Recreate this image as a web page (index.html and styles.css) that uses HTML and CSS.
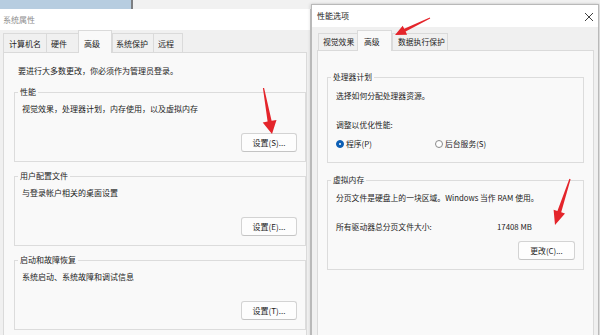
FILE: index.html
```html
<!DOCTYPE html>
<html lang="zh-CN">
<head>
<meta charset="utf-8">
<title>系统属性 / 性能选项</title>
<link rel="stylesheet" href="styles.css">
</head>
<body>
<div class="desk">
  <div class="strip-blue"></div>
  <div class="strip-line"></div>

  <section class="win win-left">
    <header class="titlebar"><span class="title title-inactive">系统属性</span></header>
    <div class="winbody">
      <div class="tabs tabs-left">
        <div class="tab tab-a">计算机名</div>
        <div class="tab tab-b">硬件</div>
        <div class="tab tab-c active">高级</div>
        <div class="tab tab-d">系统保护</div>
        <div class="tab tab-e">远程</div>
      </div>
      <div class="pane pane-left">
        <p class="note">要进行大多数更改，你必须作为管理员登录。</p>
        <fieldset class="group">
          <legend>性能</legend>
          <p class="gtext">视觉效果，处理器计划，内存使用，以及虚拟内存</p>
          <div class="btnrow"><button class="btn">设置(S)...</button></div>
        </fieldset>
        <fieldset class="group">
          <legend>用户配置文件</legend>
          <p class="gtext">与登录帐户相关的桌面设置</p>
          <div class="btnrow"><button class="btn">设置(E)...</button></div>
        </fieldset>
        <fieldset class="group">
          <legend>启动和故障恢复</legend>
          <p class="gtext">系统启动、系统故障和调试信息</p>
          <div class="btnrow"><button class="btn">设置(T)...</button></div>
        </fieldset>
      </div>
    </div>
  </section>

  <section class="win win-right">
    <header class="titlebar titlebar-right">
      <span class="title">性能选项</span>
      <svg class="close" viewBox="0 0 10 10" width="10" height="10"><path d="M1 1L9 9M9 1L1 9" stroke="#2b2b2b" stroke-width="0.9" fill="none"/></svg>
    </header>
    <div class="winbody">
      <div class="tabs tabs-right">
        <div class="tab rtab-a">视觉效果</div>
        <div class="tab rtab-b active">高级</div>
        <div class="tab rtab-c">数据执行保护</div>
      </div>
      <div class="pane pane-right">
        <fieldset class="group group-cpu">
          <legend>处理器计划</legend>
          <p class="gtext">选择如何分配处理器资源。</p>
          <p class="gtext gap17">调整以优化性能:</p>
          <div class="radios">
            <label class="radio"><span class="dot on"></span>程序(P)</label>
            <label class="radio"><span class="dot"></span>后台服务(S)</label>
          </div>
        </fieldset>
        <fieldset class="group group-vm">
          <legend>虚拟内存</legend>
          <p class="gtext">分页文件是硬盘上的一块区域。Windows 当作 RAM 使用。</p>
          <div class="sizerow gap17"><span>所有驱动器总分页文件大小:</span><span>17408 MB</span></div>
          <div class="btnrow btnrow-vm"><button class="btn btn-wide">更改(C)...</button></div>
        </fieldset>
      </div>
    </div>
  </section>

  <svg class="arrows" width="600" height="335" viewBox="0 0 600 335">
    <polygon fill="#e4252b" points="262.9,88.1 264.1,87.9 271.6,120.8 276.5,119.9 272,134 262.7,122.5 267.6,121.6"/>
    <polygon fill="#e4252b" points="429.8,17.55 430.2,18.45 405.6,31.6 407.1,34.7 395,35 402.7,25.7 404.2,28.8"/>
    <polygon fill="#e4252b" points="569.4,178.8 570.6,179.2 561.2,212.3 565,213.6 555,225 553.6,209.8 557.4,211.1"/>
  </svg>
</div>
</body>
</html>
```

FILE: styles.css
```css
* { box-sizing: border-box; }
html, body { margin: 0; padding: 0; }
body {
  width: 600px;
  height: 335px;
  overflow: hidden;
  background: #e6e6e6;
  font-family: "Noto Sans CJK SC", "Noto Sans", sans-serif;
  color: #1c1c1c;
}
p { margin: 0; }

.desk {
  position: relative;
  width: 600px;
  height: 335px;
  overflow: hidden;
  background: #f1f1f1;
}
.strip-blue {
  position: absolute;
  left: 0; top: 0;
  width: 131px; height: 9px;
  background: #b7cde0;
}
.strip-line {
  position: absolute;
  left: 131px; top: 0;
  width: 2px; height: 9px;
  background: #7d7f82;
}

.win {
  position: absolute;
  background: #f0f0f0;
}
.win-left {
  left: 0; top: 9px;
  width: 311px; height: 340px;
  border-right: 1px solid #c9c9c9;
}
.win-right {
  left: 311px; top: 4px;
  width: 288px; height: 340px;
  border: 1px solid #b9b9b9;
  border-bottom: none;
  box-shadow: -1px 0 3px rgba(0,0,0,0.12), 1px 0 2px rgba(0,0,0,0.1);
  z-index: 2;
}

.titlebar {
  height: 21px;
  background: #ffffff;
  display: flex;
  align-items: center;
  padding-left: 3px;
}
.titlebar-right {
  height: 22px;
  padding-left: 5px;
  padding-right: 4px;
  justify-content: space-between;
}
.title {
  font-size: 8px;
  line-height: 12px;
  color: #1a1a1a;
}
.title-inactive { color: #8d8d8d; }
.close { display: block; margin-top: 2px; }

.winbody { padding: 0; }

.tabs {
  display: flex;
  align-items: flex-end;
  position: relative;
  z-index: 1;
}
.tabs-left { height: 19px; margin-top: 3px; padding-left: 3px; }
.tabs-right { height: 17px; margin-top: 6px; padding-left: 6px; }

.tab {
  height: 19px;
  border: 1px solid #dadada;
  border-bottom: none;
  border-right: none;
  background: #f0f0f0;
  font-size: 8px;
  line-height: 16px;
  padding-top: 2px;
  padding-left: 5px;
  white-space: nowrap;
}
.tab.active {
  height: 23px;
  padding-top: 5px;
  margin-bottom: -1px;
  background: #f9f9f9;
  border-right: 1px solid #dadada;
}
.tab-a { width: 43px; }
.tab-b { width: 32px; padding-left: 4px; }
.tab-c { width: 34px; }
.tab-d { width: 41px; padding-left: 3px; }
.tab-e { width: 30px; padding-left: 4px; border-right: 1px solid #dadada; }

.tabs-right .tab {
  height: 17px;
  font-size: 7.8px;
  line-height: 14px;
  padding-top: 1px;
}
.tabs-right .tab.active {
  height: 21px;
  padding-top: 4px;
}
.rtab-a { width: 39px; padding-left: 4px; }
.rtab-b { width: 35px; padding-left: 6px !important; }
.rtab-c { width: 56px; padding-left: 5px; border-right: 1px solid #dadada; }

.pane {
  background: #f9f9f9;
  border: 1px solid #dadada;
  height: 320px;
}
.pane-left {
  margin-left: 3px;
  width: 304px;
  padding: 12px 0 0 10px;
  font-size: 8px;
}
.pane-right {
  margin-left: 5px;
  width: 277px;
  padding: 12px 9px 0 9px;
  font-size: 7.8px;
}

.note {
  line-height: 12px;
  padding-left: 4px;
  white-space: nowrap;
}

.group {
  margin: 8px 0 0 0;
  padding: 5px 8px 9px 5px;
  border: 1px solid #dcdcdc;
  min-width: 0;
}
.pane-left .group:first-of-type { margin-top: 9px; }
.group legend {
  padding: 0 2px;
  margin-left: -2px;
  line-height: 12px;
  white-space: nowrap;
}
.gtext {
  line-height: 12px;
  padding-left: 2px;
  white-space: nowrap;
}
.pane-right .gtext { padding-left: 3px; }
.gap17 { margin-top: 17px; }

.btnrow {
  display: flex;
  justify-content: flex-end;
  margin-top: 18px;
}
.btnrow-vm { margin-top: 8px; }
.btn {
  width: 56px;
  height: 19px;
  padding: 0;
  background: #fdfdfd;
  border: 1px solid #d3d3d3;
  border-bottom-color: #c4c4c4;
  border-radius: 3px;
  font-family: inherit;
  font-size: 8px;
  line-height: 16px;
  color: #1c1c1c;
}
.btn-wide { width: 57px; font-size: 7.8px; }

.group-cpu { padding: 7px 8px 12px 5px; }
.group-vm { margin-top: 11px; padding: 6px 8px 9px 5px; }

.radios {
  display: grid;
  grid-template-columns: 99px auto;
  margin-top: 7px;
  padding-left: 3px;
  line-height: 12px;
}
.radio {
  display: flex;
  align-items: center;
  gap: 2px;
  white-space: nowrap;
}
.dot {
  width: 8px;
  height: 8px;
  border-radius: 50%;
  border: 1px solid #8a8a8a;
  background: #ffffff;
  position: relative;
  flex: none;
}
.dot.on {
  background: #0d5fb5;
  border-color: #0d5fb5;
}
.dot.on::after {
  content: "";
  position: absolute;
  left: 1.75px; top: 1.75px;
  width: 2.5px; height: 2.5px;
  border-radius: 50%;
  background: #ffffff;
}

.sizerow {
  display: grid;
  grid-template-columns: 161px auto;
  padding-left: 3px;
  line-height: 12px;
  white-space: nowrap;
}

.arrows {
  position: absolute;
  left: 0; top: 0;
  z-index: 5;
  pointer-events: none;
}
```
